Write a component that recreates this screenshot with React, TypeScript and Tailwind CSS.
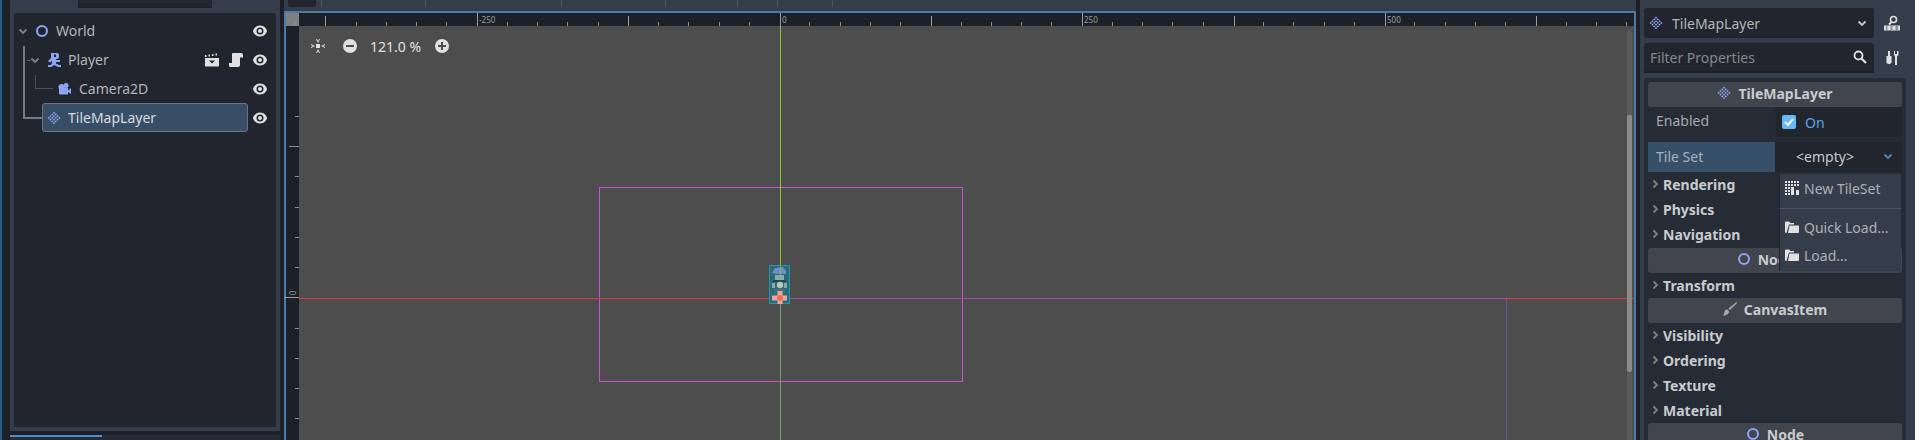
const BLUE = "#8da5f3"

const topTicks = [321, 425, 561, 665, 737, 777, 832]
const rulerMajor = [325, 628, 931, 1234, 1536]
const rulerLabels = [
  { x: 477, text: "-250" },
  { x: 780, text: "0" },
  { x: 1082, text: "250" },
  { x: 1385, text: "500" },
]
const rulerMinor = Array.from({ length: 46 }, (_, i) => 295 + i * 30.25).filter(
  (x) => ![...rulerMajor, ...rulerLabels.map((l) => l.x)].some((m) => Math.abs(m - x) < 8) && x < 1632,
)
const sideMinor = [116, 176, 207, 237, 267, 328, 358, 388, 418]

function Eye() {
  return (
    <svg width="16" height="16" viewBox="0 0 16 16" className="shrink-0">
      <path
        fillRule="evenodd"
        fill="#e0e0e0"
        d="M8 2.500C4 2.500 1.500 5.500 1 8c.5 2.500 3 5.500 7 5.500s6.500-3 7-5.500C14.500 5.500 12 2.500 8 2.500zM8 4.500a3.500 3.500 0 1 1 0 7 3.500 3.500 0 0 1 0-7z"
      />
      <circle cx="8" cy="8" r="2" fill="#e0e0e0" />
    </svg>
  )
}

function Chevron({ open, color = "#7d8187" }: { open?: boolean; color?: string }) {
  return (
    <svg width="10" height="10" viewBox="0 0 10 10" className="shrink-0">
      <path
        d={open ? "M1.500 3.500 5 7l3.500-3.500" : "M3.500 1.500 7 5 3.500 8.500"}
        fill="none"
        stroke={color}
        strokeWidth="1.800"
      />
    </svg>
  )
}

function NodeIcon({ size = 14 }: { size?: number }) {
  return (
    <svg width={size} height={size} viewBox="0 0 14 14" className="shrink-0">
      <circle cx="7" cy="7" r="5" fill="none" stroke={BLUE} strokeWidth="2" />
    </svg>
  )
}

function TileIcon() {
  const cells = [0, 1, 2, 3]
  return (
    <svg width="14" height="14" viewBox="0 0 14 14" className="shrink-0">
      <g transform="rotate(45 7 7)" fill={BLUE}>
        {cells.map((r) =>
          cells.map((c) => (
            <rect key={`${r}-${c}`} x={2.400 + c * 2.500} y={2.400 + r * 2.500} width="1.600" height="1.600" />
          )),
        )}
      </g>
    </svg>
  )
}

function PlayerIcon() {
  return (
    <svg width="14" height="14" viewBox="0 0 14 14" className="shrink-0">
      <path
        fillRule="evenodd"
        fill={BLUE}
        d="M4 0h6a2 2 0 0 1 2 2v2a2 2 0 0 1-2 2H9v1h4v2H9v1.500l3 1.500h2v2h-3l-4-2-2.500 2H1v-2h3l1-1.500V8L3 9.500 1 8l3-3zM7 1.500v2.500h2V1.500z"
      />
    </svg>
  )
}

function CameraIcon() {
  return (
    <svg width="14" height="14" viewBox="0 0 14 14" className="shrink-0">
      <circle cx="3.500" cy="5" r="3" fill={BLUE} />
      <circle cx="8" cy="3.500" r="2.500" fill={BLUE} />
      <path fill={BLUE} d="M1 6h9v6.500H2a1 1 0 0 1-1-1zM10 8.500l3-2.500v6l-3-2z" />
    </svg>
  )
}

function ClapIcon() {
  return (
    <svg width="14" height="14" viewBox="0 0 14 14">
      <path fill="#e0e0e0" d="M0 5h14v7.500a1 1 0 0 1-1 1H.5a.5.5 0 0 1-.5-.5z" />
      <path fill="#21262e" d="M4 7.500h6l-3 3z" />
      <path fill="#e0e0e0" d="M0 2h1.500v2H0zM3.500 1.500H5v2H3.500zM7 1h1.500v2H7zM10.500.5H12v2h-1.500z" />
    </svg>
  )
}

function ScriptIcon() {
  return (
    <svg width="14" height="14" viewBox="0 0 14 14">
      <path
        fill="#e0e0e0"
        d="M4 0h8a2 2 0 0 1 2 2v2.500h-3V12a2 2 0 0 1-2 2H1.500A1.500 1.500 0 0 1 0 12.500V10h3V1a1 1 0 0 1 1-1z"
      />
    </svg>
  )
}

function FolderIcon() {
  return (
    <svg width="14" height="14" viewBox="0 0 14 14" className="shrink-0">
      <path fill="#e0e0e0" d="M0 2.500a1 1 0 0 1 1-1h3l1.500 1.500H9v1.500H4L1.500 13H1a1 1 0 0 1-1-1z" />
      <path fill="#e0e0e0" d="M4.500 5.500H14V12a1 1 0 0 1-1 1H3z" />
    </svg>
  )
}

function TreeRow({
  indent,
  chevron,
  icon,
  label,
  selected,
  extras,
}: {
  indent: number
  chevron?: boolean
  icon: React.ReactNode
  label: string
  selected?: boolean
  extras?: React.ReactNode
}) {
  return (
    <div className="flex h-[29px] items-center pr-[8px]">
      <div className="flex h-full min-w-0 flex-1 items-center" style={{ paddingLeft: indent }}>
        <div
          className={
            selected
              ? "flex h-[29px] w-[206px] items-center gap-[7px] rounded-[3px] border border-[#6b7480] bg-[#374e66] pl-[4px] text-[#d6dade]"
              : "flex items-center gap-[7px] text-[#b3b5b9]"
          }
        >
          {chevron && <Chevron open />}
          {icon}
          <span>{label}</span>
        </div>
      </div>
      <div className="flex items-center gap-[9px]">
        {extras}
        <Eye />
      </div>
    </div>
  )
}

function LeftDock() {
  return (
    <div className="flex h-full w-[284px] shrink-0 flex-col border-l-2 border-[#265d89] pl-[8px] pr-[4px]">
      <div className="flex h-[431px] flex-col bg-[#363d4a] px-[4px] pb-[4px]">
        <div className="relative ml-[64px] h-[8px] w-[134px] border-b border-[#1a1d23] bg-[#21262e]" />
        <div className="relative mt-[5px] flex-1 rounded-t-[3px] bg-[#21262e] pl-[4px] pt-[3px]">
          <TreeRow indent={0} chevron icon={<NodeIcon />} label="World" />
          <TreeRow
            indent={12}
            chevron
            icon={<PlayerIcon />}
            label="Player"
            extras={
              <div className="flex items-center gap-[10px]">
                <ClapIcon />
                <ScriptIcon />
              </div>
            }
          />
          <TreeRow indent={40} icon={<CameraIcon />} label="Camera2D" />
          <TreeRow indent={24} icon={<TileIcon />} label="TileMapLayer" selected />
          {/* relationship lines between the tree items */}
          <div className="absolute left-[9px] top-[33px] h-[73px] w-[19px] border-b-2 border-l-2 border-[#76797e]" />
          <div className="absolute left-[13px] top-[47px] h-px w-[4px] bg-[#5c6068]" />
          <div className="absolute left-[21px] top-[62px] h-[14px] w-[18px] border-b border-l border-[#4c5058]" />
        </div>
      </div>
      <div className="mt-[4px] h-[5px] bg-[#262b35]">
        <div className="h-[2px] w-[92px] bg-[#4d8ccb]" />
      </div>
    </div>
  )
}

function ViewportCanvas() {
  return (
    <div className="relative flex-1 bg-[#4d4d4d]">
      {/* everything below sits on the free canvas, offsets are from x=299, y=26 */}
      <div className="absolute left-[300px] top-[161px] h-[195px] w-[364px] border border-[#c653c9]" />
      <div className="absolute left-[481px] top-0 h-[272px] w-px bg-[#8fc43c]" />
      <div className="absolute left-[481px] top-[273px] h-[141px] w-px bg-[#7d9a78]" />
      <div className="absolute left-0 top-[272px] h-px w-[481px] bg-[#d83a4e]" />
      <div className="absolute left-[481px] top-[272px] h-px w-[726px] bg-[#a04fa8]" />
      <div className="absolute left-[1207px] top-[272px] h-px w-[128px] bg-[#d83a4e]" />
      <div className="absolute left-[1207px] top-[273px] h-[141px] w-px bg-[#5f5a9c]" />
      <svg width="21" height="39" viewBox="0 0 21 39" className="absolute left-[470px] top-[239px]">
        <rect x="0.500" y="0.500" width="20" height="38" fill="#2c6a78" stroke="#1f97ad" />
        <path fill="#6d8ec8" d="M3 8l3-5 8-1 3 4v3H8z" />
        <path fill="#86aeb0" d="M6 10h9v5H6z" />
        <path fill="#1d4a55" d="M4 15h13v2H4z" />
        <path fill="#8aa8a8" d="M3 18h3v5H3zM15 18h3v5h-3z" />
        <circle cx="11" cy="20" r="3.200" fill="#bcc6bb" />
        <path fill="#41707a" d="M5 24h11v4H5z" />
        <path fill="#8fc43c" d="M11 0h1v14h-1z" opacity="0.700" />
        <path fill="#f0a59b" d="M8.500 26h5v4.500H18v5h-4.500V39h-5v-3.500H3v-5h5.500z" />
        <circle cx="11" cy="33" r="3" fill="#f2685c" />
      </svg>
      <div className="absolute left-[12px] top-[12px] flex h-[16px] items-center text-[#e0e0e0]">
        <svg width="14" height="14" viewBox="0 0 14 14">
          <rect x="5" y="5" width="4" height="4" fill="#e0e0e0" />
          <path
            fill="#e0e0e0"
            d="M5 0h1l1 2 1-2h1L7 4zM5 14h1l1-2 1 2h1l-2-4zM0 5v1l2 1-2 1v1l4-2zM14 5v1l-2 1 2 1v1l-4-2z"
          />
        </svg>
        <svg width="14" height="14" viewBox="0 0 14 14" className="ml-[18px]">
          <circle cx="7" cy="7" r="7" fill="#e0e0e0" />
          <rect x="3" y="6" width="8" height="2" fill="#4d4d4d" />
        </svg>
        <span className="ml-[13px] w-[60px]">121.0 %</span>
        <svg width="14" height="14" viewBox="0 0 14 14" className="ml-[5px]">
          <circle cx="7" cy="7" r="7" fill="#e0e0e0" />
          <path fill="#4d4d4d" d="M3 6h3V3h2v3h3v2H8v3H6V8H3z" />
        </svg>
      </div>
      <div className="absolute right-[2px] top-[4px] bottom-0 w-[5px] rounded-t-[2px] bg-[#5a5a5a]">
        <div className="mt-[85px] h-[257px] rounded-[2px] bg-[#8b8b8b]" />
      </div>
    </div>
  )
}

function Center() {
  return (
    <div className="flex h-full min-w-0 flex-1 flex-col">
      <div className="relative h-[11px] shrink-0 bg-[#363d4a]">
        <div className="absolute left-[4px] top-0 h-[7px] w-[28px] rounded-b-[3px] bg-[#21262e]" />
        {topTicks.map((x) => (
          <div key={x} className="absolute top-0 h-[7px] w-px bg-[#4a5160]" style={{ left: x - 284 }} />
        ))}
      </div>
      <div className="flex min-h-0 flex-1 flex-col border-x-2 border-t-2 border-[#4c7ba8]">
        <div className="relative h-[13px] shrink-0 bg-[#1c2028]">
          <div className="absolute left-0 top-0 h-[13px] w-[13px] bg-[#808080]" />
          {rulerMinor.map((x) => (
            <div key={x} className="absolute bottom-0 h-[4px] w-px bg-[#8a8c90]" style={{ left: x - 286 }} />
          ))}
          {rulerMajor.map((x) => (
            <div key={x} className="absolute bottom-0 h-[10px] w-px bg-[#9a9c9f]" style={{ left: x - 286 }} />
          ))}
          {rulerLabels.map((l) => (
            <div key={l.x}>
              <div className="absolute bottom-0 h-[13px] w-px bg-[#9a9c9f]" style={{ left: l.x - 286 }} />
              <span
                className="absolute top-[1px] text-[8px] leading-[12px] text-[#9a9c9f]"
                style={{ left: l.x - 284 }}
              >
                {l.text}
              </span>
            </div>
          ))}
        </div>
        <div className="flex min-h-0 flex-1">
          <div className="relative w-[13px] shrink-0 bg-[#1c2028]">
            <div className="absolute right-0 top-[120px] h-px w-[10px] bg-[#8a8c90]" />
            {sideMinor.map((y) => (
              <div key={y} className="absolute right-0 h-px w-[4px] bg-[#8a8c90]" style={{ top: y - 26 }} />
            ))}
            <div className="absolute right-0 top-[271px] h-px w-[15px] bg-[#9a9c9f]" />
            <span className="absolute left-[5px] top-[263px] -rotate-90 text-[8px] leading-[8px] text-[#9a9c9f]">0</span>
          </div>
          <ViewportCanvas />
        </div>
      </div>
    </div>
  )
}

function SectionHeader({ icon, label }: { icon: React.ReactNode; label: string }) {
  return (
    <div className="flex h-[25px] shrink-0 items-center justify-center gap-[7px] rounded-[3px] bg-[#41454d] pb-[3px] font-bold text-[#c9cbce]">
      {icon}
      <span>{label}</span>
    </div>
  )
}

function Group({ label }: { label: string }) {
  return (
    <div className="flex h-[25px] shrink-0 items-center gap-[3px] pb-[1px] pl-[2px] font-bold text-[#c9cbce]">
      <Chevron />
      <span>{label}</span>
    </div>
  )
}

function MenuItem({ icon, label, tall }: { icon: React.ReactNode; label: string; tall?: boolean }) {
  return (
    <div className={tall ? "flex h-[30px] items-center gap-[5px] pb-[2px] pl-[5px] text-[#adb0b5]" : "flex h-[28px] items-center gap-[5px] pb-[2px] pl-[5px] text-[#adb0b5]"}>
      {icon}
      <span>{label}</span>
    </div>
  )
}

function Inspector() {
  return (
    <div className="relative mt-[5px] flex-1 overflow-hidden rounded-t-[3px] bg-[#262c36] px-[4px] pt-[4px]">
      <SectionHeader icon={<TileIcon />} label="TileMapLayer" />
      <div className="flex h-[35px] shrink-0">
        <div className="w-[127px] pl-[8px] pt-[3px] text-[#a6a8ac]">Enabled</div>
        <div className="flex h-[30px] flex-1 items-center gap-[9px] bg-[#21262e] pl-[7px] text-[#5ba6ea]">
          <svg width="14" height="14" viewBox="0 0 14 14" className="shrink-0">
            <rect width="14" height="14" rx="2" fill="#6ab7f7" />
            <path d="M3 7l3 3 5-6" fill="none" stroke="#f2f6fa" strokeWidth="2" />
          </svg>
          <span>On</span>
        </div>
      </div>
      <div className="flex h-[30px] shrink-0">
        <div className="flex w-[127px] items-center bg-[#36506a] pb-[2px] pl-[8px] text-[#a6b0ba]">Tile Set</div>
        <div className="flex flex-1 items-center bg-[#21262e] pb-[2px] pr-[9px] text-[#c5c7ca]">
          <span className="flex-1 pr-[8px] text-center">&lt;empty&gt;</span>
          <Chevron open color="#4c8cb8" />
        </div>
      </div>
      <Group label="Rendering" />
      <Group label="Physics" />
      <Group label="Navigation" />
      <div className="h-px" />
      <SectionHeader icon={<NodeIcon />} label="Node2D" />
      <Group label="Transform" />
      <SectionHeader
        icon={
          <svg width="14" height="14" viewBox="0 0 14 14" className="shrink-0">
            <path fill="#a5a7ab" d="M13.500 0 14 1 7 8 5.500 6.500z" />
            <path fill="#a5a7ab" d="M3 7.500a2.500 2.500 0 0 1 3 3C5 13 2 13.500 0 13.500c1.500-1 1-5 3-6z" />
          </svg>
        }
        label="CanvasItem"
      />
      <Group label="Visibility" />
      <Group label="Ordering" />
      <Group label="Texture" />
      <Group label="Material" />
      <SectionHeader icon={<NodeIcon />} label="Node" />
      {/* popup menu opened from the Tile Set resource picker */}
      <div className="absolute left-[135px] top-[96px] h-[97px] w-[122px] border-l border-[#21262e] bg-[#363d4a]">
        <MenuItem
          tall
          icon={
            <svg width="14" height="14" viewBox="0 0 14 14" className="shrink-0">
              <path
                fill="#e0e0e0"
                d="M0 0h2v2H0zM3 0h2v2H3zM6 0h2v2H6zM9 0h2v2H9zM12 0h2v2h-2zM0 3h2v2H0zM3 3h2v2H3zM6 3h2v2H6zM9 3h2v2H9zM12 3h2v2h-2zM0 6h2v2H0zM3 6h2v2H3zM0 9h2v2H0zM3 9h2v2H3zM0 12h2v2H0zM3 12h2v2H3zM6 6h3v8H6zM11 9h3v5h-3z"
              />
            </svg>
          }
          label="New TileSet"
        />
        <div className="mt-[4px] h-px bg-[#4c5260]" />
        <div className="mt-[5px]">
          <MenuItem icon={<FolderIcon />} label="Quick Load..." />
        </div>
        <MenuItem icon={<FolderIcon />} label="Load..." />
      </div>
    </div>
  )
}

function RightDock() {
  return (
    <div className="h-full w-[279px] shrink-0 pl-[4px]">
      <div className="flex h-full flex-col bg-[#363d4a] pl-[4px] pr-[9px] pt-[8px]">
        <div className="flex shrink-0 items-center">
          <div className="flex h-[30px] w-[230px] items-center rounded-[3px] bg-[#21262e] pl-[5px] pr-[7px] text-[#b3b5b9]">
            <TileIcon />
            <span className="ml-[9px] flex-1">TileMapLayer</span>
            <Chevron open color="#c5c7ca" />
          </div>
          <svg width="16" height="16" viewBox="0 0 16 16" className="ml-[10px]">
            <circle cx="9.500" cy="4.500" r="3" fill="none" stroke="#e0e0e0" strokeWidth="1.600" />
            <path d="M7.500 7 5 9.500" stroke="#e0e0e0" strokeWidth="2" />
            <rect x="0" y="10.500" width="16" height="5" fill="#e0e0e0" />
            <path d="M2 12h1.500M6.500 12h2M11.500 12h2.500M2 14h1.500M6.500 14h2M11.500 14h2.500" stroke="#363d4a" />
          </svg>
        </div>
        <div className="mt-[5px] flex shrink-0 items-center">
          <div className="flex h-[30px] w-[230px] items-center rounded-t-[3px] border-b-2 border-[#1c2028] bg-[#21262e] pl-[6px] pr-[7px] text-[#83868b]">
            <span className="flex-1">Filter Properties</span>
            <svg width="14" height="14" viewBox="0 0 14 14">
              <circle cx="5.500" cy="5.500" r="4" fill="none" stroke="#e0e0e0" strokeWidth="1.800" />
              <path d="M8.500 8.500 13 13" stroke="#e0e0e0" strokeWidth="2.200" />
            </svg>
          </div>
          <svg width="14" height="14" viewBox="0 0 14 14" className="ml-[12px]">
            <path
              fill="#e0e0e0"
              d="M2 0h2v5h1.500v4.500A2.500 2.500 0 0 1 3 13 2.500 2.500 0 0 1 .5 9.500V5H2zM8 0h1v3h2V0h1.500v4L11 5.500V14H9V5.500L8 4z"
            />
          </svg>
        </div>
        <Inspector />
      </div>
    </div>
  )
}

export default function App() {
  return (
    <div className="flex h-[440px] w-[1915px] overflow-hidden bg-[#1c2028] font-['Noto_Sans',sans-serif] text-[14px]">
      <LeftDock />
      <Center />
      <RightDock />
    </div>
  )
}
